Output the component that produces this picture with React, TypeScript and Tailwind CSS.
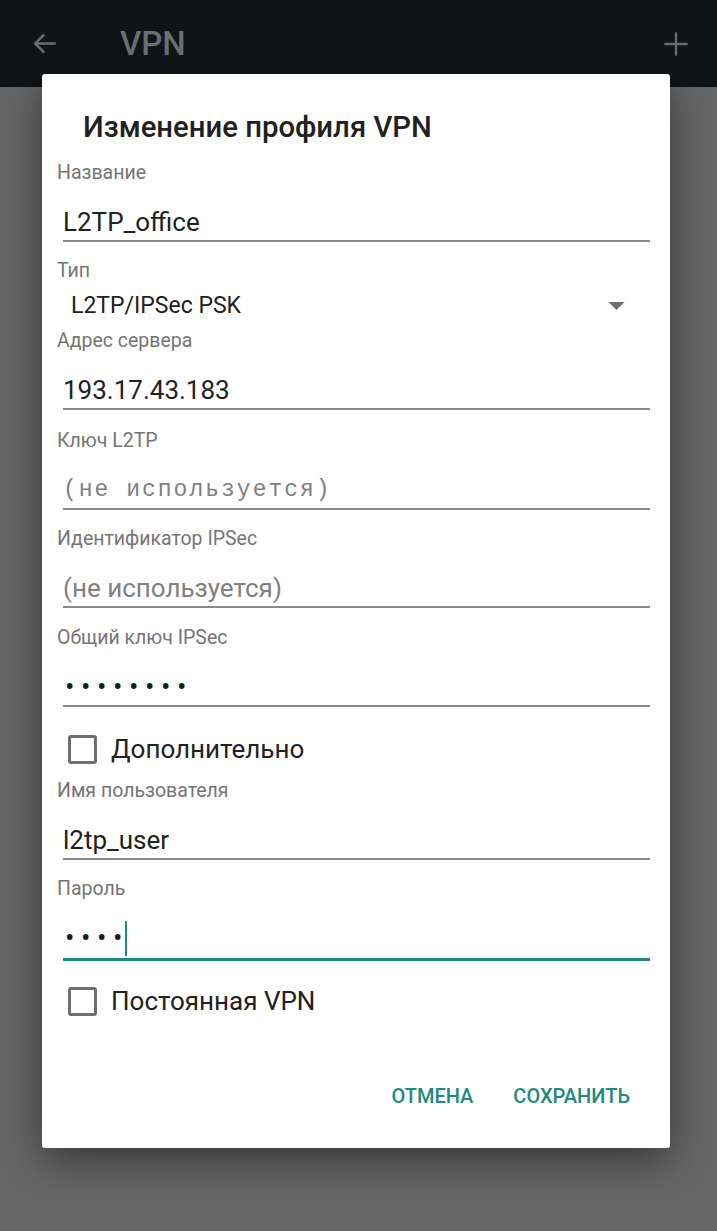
import { ReactNode } from "react"

function Label({ children }: { children: ReactNode }) {
  return <div className="h-[24px] pl-[15px] text-[19.5px] leading-[24px] text-[#757575]">{children}</div>
}

function Field({ label, children, focused = false }: { label: string; children: ReactNode; focused?: boolean }) {
  return (
    <div>
      <Label>{label}</Label>
      <div
        className={
          focused
            ? "mr-[20px] ml-[21px] pt-[21px] pb-[4px] border-b-[3px] border-[#1d8a7f]"
            : "mr-[20px] ml-[21px] pt-[21px] pb-[2px] border-b-2 border-[#8a8a8a]"
        }
      >
        <div className="h-[32px] flex items-center text-[26px] leading-[32px] text-[#212121]">{children}</div>
      </div>
    </div>
  )
}

function Dots({ count }: { count: number }) {
  return (
    <div className="flex items-center pl-[2px]">
      {Array.from({ length: count }).map((_, i) => (
        <span key={i} className="w-[16px] text-[28px] leading-[32px] text-[#1a1a1a]">
          •
        </span>
      ))}
    </div>
  )
}

function Checkbox({ label }: { label: string }) {
  return (
    <div className="h-[48px] flex items-center pl-[26px]">
      <div className="w-[29px] h-[29px] rounded-[3px] border-[3px] border-[#6e6e6e]" />
      <span className="ml-[14px] text-[26px] leading-[32px] text-[#212121]">{label}</span>
    </div>
  )
}

export default function App() {
  return (
    <div className="relative w-[717px] h-[1231px] overflow-hidden bg-[#666666] font-['Roboto',sans-serif]">
      <div className="h-[87px] bg-[#111417] flex items-center">
        <svg className="ml-[30px] w-[31px] h-[31px]" viewBox="0 0 24 24" fill="none" stroke="#6a6c6e" strokeWidth="2">
          <path d="M20 12H5M11 5l-7 7 7 7" />
        </svg>
        <span className="ml-[59px] text-[33px] font-medium text-[#6c6e70]">VPN</span>
        <svg className="ml-auto mr-[27px] w-[28px] h-[28px]" viewBox="0 0 24 24" fill="none" stroke="#6a6c6e" strokeWidth="2">
          <path d="M12 2v20M2 12h20" />
        </svg>
      </div>

      <div className="absolute left-[42px] top-[74px] w-[628px] h-[1074px] bg-white rounded-[3px] shadow-[0_12px_40px_rgba(0,0,0,0.45)]">
        <div className="pt-[37px] pl-[41px] h-[69px] text-[29.3px] leading-[32px] font-medium text-[#212121]">
          Изменение профиля VPN
        </div>

        <div className="mt-[18px]">
          <Field label="Название">L2TP_office</Field>
        </div>

        <div className="mt-[17px]">
          <Label>Тип</Label>
          <div className="h-[46px] flex items-center pl-[29px] pr-[45px]">
            <span className="text-[23px] text-[#212121]">L2TP/IPSec PSK</span>
            <svg className="ml-auto w-[17px] h-[9px]" viewBox="0 0 18 10">
              <path d="M0 0h18L9 9z" fill="#6f6f6f" />
            </svg>
          </div>
        </div>

        <Field label="Адрес сервера">193.17.43.183</Field>

        <div className="mt-[19px]">
          <Field label="Ключ L2TP">
            <span className="font-['Liberation_Mono',monospace] text-[23px] tracking-[2px] text-[#808080]">
              (не используется)
            </span>
          </Field>
        </div>

        <div className="mt-[17px]">
          <Field label="Идентификатор IPSec">
            <span className="text-[#808080]">(не используется)</span>
          </Field>
        </div>

        <div className="mt-[18px]">
          <Field label="Общий ключ IPSec">
            <Dots count={8} />
          </Field>
        </div>

        <div className="mt-[18px]">
          <Checkbox label="Дополнительно" />
        </div>

        <div className="mt-[6px]">
          <Field label="Имя пользователя">l2tp_user</Field>
        </div>

        <div className="mt-[17px]">
          <Field label="Пароль" focused>
            <Dots count={4} />
            <span className="ml-[-4px] w-[2px] h-[35px] bg-[#1d8a7f]" />
          </Field>
        </div>

        <div className="mt-[16px]">
          <Checkbox label="Постоянная VPN" />
        </div>

        <div className="mt-[53px] h-[36px] flex items-center justify-end pr-[40px] gap-[40px] text-[20px] font-medium text-[#1d8a7f]">
          <span>ОТМЕНА</span>
          <span>СОХРАНИТЬ</span>
        </div>
      </div>
    </div>
  )
}
